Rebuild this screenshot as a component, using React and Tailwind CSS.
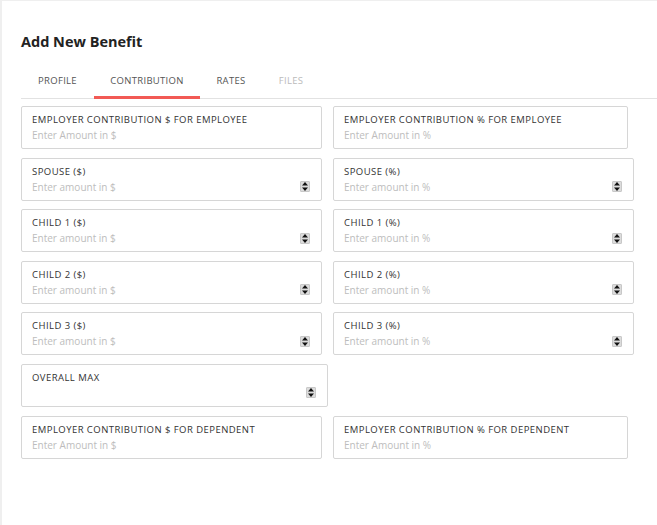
import React from "react";

const Spinner = () => (
  <span className="flex flex-col items-center justify-center w-[10px] h-[11px] bg-[#dcdcdc] border border-[#c8c8c8] rounded-[1px]">
    <svg width="6" height="9" viewBox="0 0 6 9">
      <path d="M3 0 L6 3.5 L0 3.5 Z" fill="#111" />
      <path d="M0 5.5 L6 5.5 L3 9 Z" fill="#111" />
    </svg>
  </span>
);

const Field = ({ label, placeholder, width, spinner }) => (
  <div
    className={`${width} h-[43px] border border-[#d6d6d6] rounded-[2px] pl-[10px] pr-[11px] pt-[7px] flex flex-col`}
  >
    <span className="text-[9.5px] leading-[12px] font-medium text-[#333] tracking-[0.45px] uppercase">
      {label}
    </span>
    <div className="flex items-center justify-between mt-[2px]">
      <span className="text-[10px] leading-[14px] text-[#bdbdbd]">
        {placeholder || "\u00a0"}
      </span>
      {spinner && <Spinner />}
    </div>
  </div>
);

const tabs = [
  { name: "PROFILE", cls: "w-[73px] text-[#555]" },
  { name: "CONTRIBUTION", cls: "w-[106px] text-[#555] border-b-[3px] border-[#f25a55]" },
  { name: "RATES", cls: "w-[62px] text-[#555]" },
  { name: "FILES", cls: "w-[58px] text-[#bbb]" },
];

export default function App() {
  return (
    <div
      className="w-[657px] h-[525px] bg-white border-t border-l-2 border-[#efefef] pl-[19px] pt-[31px]"
      style={{ fontFamily: "'Open Sans', 'Liberation Sans', sans-serif" }}
    >
      <h1 className="text-[14.5px] font-bold text-[#222] leading-[20px]">
        Add New Benefit
      </h1>

      {/* Tabs */}
      <div className="mt-[16px] flex border-b border-[#e2e2e2]">
        {tabs.map((t) => (
          <div
            key={t.name}
            className={`${t.cls} h-[31px] flex items-start justify-center pt-[6px] text-[9.5px] font-medium tracking-[0.3px] -mb-px`}
          >
            {t.name}
          </div>
        ))}
      </div>

      {/* Fields */}
      <div className="mt-[7px] flex flex-col gap-[8.6px]">
        <div className="flex gap-[11px]">
          <Field label="Employer Contribution $ for Employee" placeholder="Enter Amount in $" width="w-[301px]" />
          <Field label="Employer Contribution % for Employee" placeholder="Enter Amount in %" width="w-[295px]" />
        </div>
        <div className="flex gap-[11px]">
          <Field label="Spouse ($)" placeholder="Enter amount in $" width="w-[301px]" spinner />
          <Field label="Spouse (%)" placeholder="Enter amount in %" width="w-[301px]" spinner />
        </div>
        <div className="flex gap-[11px]">
          <Field label="Child 1 ($)" placeholder="Enter amount in $" width="w-[301px]" spinner />
          <Field label="Child 1 (%)" placeholder="Enter amount in %" width="w-[301px]" spinner />
        </div>
        <div className="flex gap-[11px]">
          <Field label="Child 2 ($)" placeholder="Enter amount in $" width="w-[301px]" spinner />
          <Field label="Child 2 (%)" placeholder="Enter amount in %" width="w-[301px]" spinner />
        </div>
        <div className="flex gap-[11px]">
          <Field label="Child 3 ($)" placeholder="Enter amount in $" width="w-[301px]" spinner />
          <Field label="Child 3 (%)" placeholder="Enter amount in %" width="w-[301px]" spinner />
        </div>
        <div className="flex gap-[11px]">
          <Field label="Overall Max" width="w-[307px]" spinner />
        </div>
        <div className="flex gap-[11px]">
          <Field label="Employer Contribution $ for Dependent" placeholder="Enter Amount in $" width="w-[301px]" />
          <Field label="Employer Contribution % for Dependent" placeholder="Enter Amount in %" width="w-[295px]" />
        </div>
      </div>
    </div>
  );
}
